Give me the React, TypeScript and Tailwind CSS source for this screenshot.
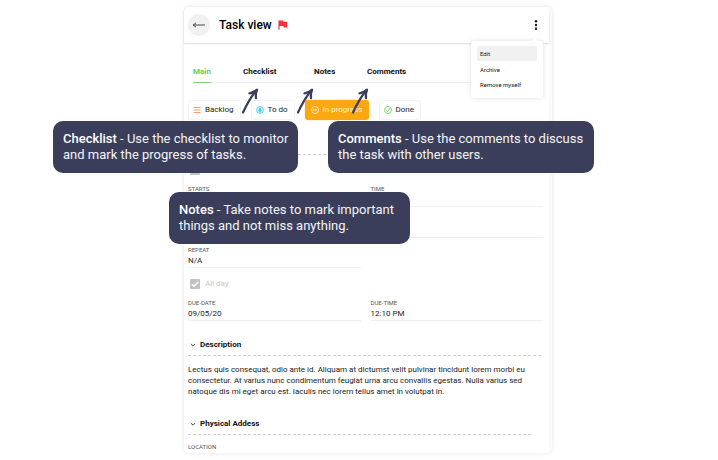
import type { ReactNode } from "react";

const tabs = [
  { name: "Main", width: "w-[50px]", active: true },
  { name: "Checklist", width: "w-[71px]", active: false },
  { name: "Notes", width: "w-[53px]", active: false },
  { name: "Comments", width: "w-[60px]", active: false },
];

function Field({ id, label, value }: { id: string; label: string; value: string }) {
  return (
    <div className="border-b border-[#f0f0f0]">
      <label htmlFor={id} className="block text-[6px] leading-[8px] text-[#555]">
        {label}
      </label>
      <input
        id={id}
        type="text"
        defaultValue={value}
        className="block h-[13px] w-full bg-transparent text-[8px] text-[#222] outline-none"
      />
    </div>
  );
}

function AllDay({ id }: { id: string }) {
  return (
    <div className="flex h-[10px] items-center gap-[5px] pl-[2px]">
      <span className="relative h-[10px] w-[10px]">
        <input
          id={id}
          type="checkbox"
          defaultChecked
          className="block h-[10px] w-[10px] appearance-none rounded-[1px] bg-[#c2c2c2]"
        />
        <svg viewBox="0 0 10 10" className="pointer-events-none absolute inset-0" fill="none" stroke="#fff" strokeWidth="1.3">
          <path d="M1.8 5.2 4 7.4 8.3 2.8" />
        </svg>
      </span>
      <label htmlFor={id} className="text-[8px] leading-[10px] text-[#c8c8c8]">
        All day
      </label>
    </div>
  );
}

function SectionTitle({ children }: { children: ReactNode }) {
  return (
    <h2>
      <button className="flex h-[12px] items-center gap-[4px] pl-[2px] text-[8px] leading-[12px] font-bold text-[#111]">
        <svg viewBox="0 0 6 6" className="h-[6px] w-[6px]" fill="none" stroke="#333" strokeWidth="0.9">
          <path d="M0.8 2 3 4.2 5.2 2" />
        </svg>
        {children}
      </button>
    </h2>
  );
}

function DashedLine() {
  return (
    <div className="h-px bg-[repeating-linear-gradient(90deg,#d2d2d2_0_3px,transparent_3px_5px)]" />
  );
}

function Status({ label, active, children }: { label: string; active?: boolean; children: ReactNode }) {
  return (
    <button
      className={
        active
          ? "flex h-[20px] items-center gap-[4px] rounded-[3px] bg-[#f9a80f] px-[6px] text-[8px] text-[#fff1cf] shadow-[0_0_2px_rgba(249,168,15,0.5)]"
          : "flex h-[20px] items-center gap-[4px] rounded-[3px] border border-[#f4f4f4] bg-white pr-[6px] pl-[4px] text-[8px] text-[#222]"
      }
    >
      <svg viewBox="0 0 8 8" className="h-[8px] w-[8px]" fill="none">
        {children}
      </svg>
      {label}
    </button>
  );
}

function Arrow({ className }: { className: string }) {
  return (
    <svg viewBox="0 0 18 26" className={`absolute h-[26px] w-[18px] ${className}`} fill="none" stroke="#3b3e5b" strokeLinecap="round" strokeLinejoin="round">
      <path d="M2 24.5C5 18 9 10 15.5 2" strokeWidth="2.2" />
      <path d="M8.5 5.4C11 5 13.4 3.8 16 1.8C14.8 4.6 14.6 7.4 15 10.2" strokeWidth="2.3" />
    </svg>
  );
}

function Callout({ title, className, children }: { title: string; className: string; children: ReactNode }) {
  return (
    <aside className={`absolute h-[52px] rounded-[10px] bg-[#3b3e5b] px-[10px] py-[10px] text-[13px] leading-[16px] whitespace-nowrap text-[#f4f4f8] ${className}`}>
      <strong className="font-medium text-white">{title}</strong> - {children}
    </aside>
  );
}

export default function App() {
  return (
    <div className="relative bg-white pt-[7px] pr-[166px] pb-[7px] pl-[184px] font-[Roboto,sans-serif]">
      <main className="rounded-[5px] border-r-[3px] border-[#fafafa] bg-white pb-[2px] shadow-[0_0_5px_rgba(0,0,0,0.1)]">
        <header className="relative flex h-[36px] items-center rounded-t-[5px] bg-white pr-[8px] pl-[4px] shadow-[0_1px_2px_rgba(0,0,0,0.14)]">
          <button aria-label="Back" className="flex h-[22px] w-[22px] items-center justify-center rounded-full bg-[#f1f1f1]">
            <svg viewBox="0 0 14 8" className="h-[8px] w-[14px]" fill="none" stroke="#333" strokeWidth="0.9">
              <path d="M13 4H1.2M4 1.8 1.2 4 4 6.2" />
            </svg>
          </button>
          <h1 className="ml-[9px] text-[12px] leading-[14px] font-medium text-black">Task view</h1>
          <svg viewBox="0 0 10 10" className="ml-[6px] h-[10px] w-[10px]" fill="#f8323a">
            <path d="M0.4 0.4H5.2L5.6 1.7H9.3V7.4H5.7L5.3 6.1H1.6V9.8H0.4Z" />
          </svg>
          <button aria-label="More options" className="ml-auto flex h-[14px] w-[10px] items-center justify-center">
            <svg viewBox="0 0 4 12" className="h-[12px] w-[4px]" fill="#222">
              <circle cx="2" cy="2.3" r="1.25" />
              <circle cx="2" cy="6" r="1.25" />
              <circle cx="2" cy="9.7" r="1.25" />
            </svg>
          </button>
          <div className="absolute top-[34px] right-[6px] z-10 w-[72px] rounded-[3px] bg-white px-[6px] pt-[5px] pb-[6px] shadow-[0_0_5px_rgba(0,0,0,0.13)]">
            <svg viewBox="0 0 8 4" className="absolute -top-[3px] right-[4px] h-[4px] w-[8px]" fill="#fff">
              <path d="M0 4 4 0 8 4Z" />
            </svg>
            <div className="flex flex-col text-[6px] leading-[15px] text-[#111]">
              <button className="h-[15px] rounded-[2px] bg-[#f1f1f1] px-[3px] text-left">Edit</button>
              <button className="h-[16px] px-[3px] text-left">Archive</button>
              <button className="h-[15px] px-[3px] text-left">Remove myself</button>
            </div>
          </div>
        </header>

        <div className="pr-[6px] pl-[4px]">
          <nav className="mt-[23px] ml-[5px] flex border-b border-[#f0f0f0] text-[8px] leading-[12px] font-bold">
            {tabs.map((tab) => (
              <div key={tab.name} className={tab.width}>
                <button
                  className={
                    tab.active
                      ? "-mb-px block border-b border-[#7fd870] pb-[4px] text-[#62cf4f]"
                      : "block pb-[4px] text-[#111]"
                  }
                >
                  {tab.name}
                </button>
              </div>
            ))}
          </nav>

          <div className="mt-[17px] flex gap-[10px]">
            <Status label="Backlog">
              <path d="M0.5 1.5H7.5M0.5 4H7.5M0.5 6.5H7.5" stroke="#ff9a62" strokeWidth="1" />
            </Status>
            <Status label="To do">
              <circle cx="4" cy="4" r="3.4" stroke="#35c7ee" strokeWidth="0.9" />
              <path d="M4 1.4C5.3 2 5.4 3.6 5.8 5.4H2.2C2.6 3.6 2.7 2 4 1.4ZM3.3 5.8H4.7V6.4H3.3Z" fill="#35c7ee" />
            </Status>
            <Status label="In progress" active>
              <circle cx="4" cy="4" r="3.5" stroke="#fff1cf" strokeWidth="0.8" />
              <path d="M1.9 4H6.1" stroke="#fff1cf" strokeWidth="1" />
            </Status>
            <Status label="Done">
              <circle cx="4" cy="4" r="3.5" stroke="#62cf4f" strokeWidth="0.8" />
              <path d="M2.1 4.2 3.5 5.5 6.4 1.9" stroke="#62cf4f" strokeWidth="0.8" />
            </Status>
          </div>

          <section className="mt-[34px]">
            <DashedLine />
            <div className="mt-[10px]">
              <AllDay id="start-all-day" />
            </div>
            <div className="mt-[10px] grid grid-cols-2 gap-x-[10px] gap-y-[8px]">
              <Field id="starts" label="STARTS" value="" />
              <Field id="time" label="TIME" value="" />
              <div className="col-span-2 h-[23px] border-b border-[#f0f0f0]" />
              <Field id="repeat" label="REPEAT" value="N/A" />
            </div>
            <div className="mt-[11px]">
              <AllDay id="due-all-day" />
            </div>
            <div className="mt-[10px] grid grid-cols-2 gap-[10px]">
              <Field id="due-date" label="DUE-DATE" value="09/05/20" />
              <Field id="due-time" label="DUE-TIME" value="12:10 PM" />
            </div>
          </section>

          <section className="mt-[18px]">
            <SectionTitle>Description</SectionTitle>
            <div className="mt-[4px]">
              <DashedLine />
            </div>
            <p className="mt-[8px] pr-[10px] text-[8px] leading-[11px] text-[#222]">
              Lectus quis consequat, odio ante id. Aliquam at dictumst velit pulvinar tincidunt lorem morbi eu consectetur. At varius nunc condimentum feugiat urna arcu convallis egestas. Nulla varius sed natoque dis mi eget arcu est. Iaculis nec lorem tellus amet in volutpat in.
            </p>
          </section>

          <section className="mt-[21px]">
            <SectionTitle>Physical Addess</SectionTitle>
            <div className="mt-[4px] mr-[12px]">
              <DashedLine />
            </div>
            <p className="mt-[8px] text-[6px] leading-[8px] text-[#555]">LOCATION</p>
          </section>
        </div>
      </main>

      <Arrow className="top-[88px] left-[241px]" />
      <Arrow className="top-[88px] left-[296px]" />
      <Arrow className="top-[88px] left-[351px]" />

      <Callout title="Checklist" className="top-[121px] left-[53px] w-[245px]">
        Use the checklist to monitor
        <br />
        and mark the progress of tasks.
      </Callout>
      <Callout title="Comments" className="top-[121px] left-[328px] w-[266px]">
        Use the comments to discuss
        <br />
        the task with other users.
      </Callout>
      <Callout title="Notes" className="top-[192px] left-[169px] w-[241px]">
        Take notes to mark important
        <br />
        things and not miss anything.
      </Callout>
    </div>
  );
}
